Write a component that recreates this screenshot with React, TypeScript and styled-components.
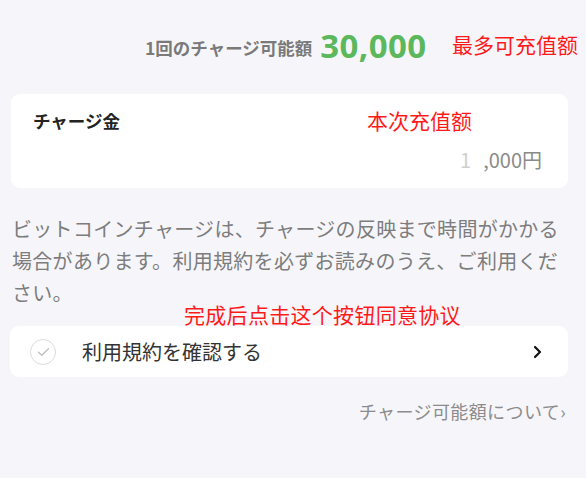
import React from "react";
import styled, { createGlobalStyle } from "styled-components";

const Global = createGlobalStyle`
  html, body { margin: 0; padding: 0; background: #f6f6fa; }
  body { font-family: "Noto Sans CJK JP", "Noto Sans", sans-serif; }
`;

const Page = styled.div`
  width: 586px;
  height: 478px;
  background: #f6f6fa;
  padding: 0 18px 0 11px;
  box-sizing: border-box;
  display: flex;
  flex-direction: column;
  position: relative;
`;

const Header = styled.div`
  height: 94px;
  display: flex;
  align-items: center;
  padding-left: 134px;
  padding-bottom: 4px;
  box-sizing: border-box;
  position: relative;
`;

const LimitLabel = styled.span`
  font-size: 17.5px;
  font-weight: 700;
  color: #7a7a7a;
  margin-top: 4px;
`;

const LimitValue = styled.span`
  font-family: "Open Sans", "Noto Sans", sans-serif;
  font-size: 33px;
  font-weight: 700;
  color: #5cb85c;
  margin-left: 8px;
  letter-spacing: 0.4px;
`;

const Note = styled.span<{ $x: number; $y: number }>`
  position: absolute;
  left: ${(p) => p.$x}px;
  top: ${(p) => p.$y}px;
  font-family: "Noto Sans CJK SC", sans-serif;
  font-size: 21px;
  line-height: 26px;
  color: #ff1a1a;
  white-space: nowrap;
`;

const Card = styled.div`
  background: #ffffff;
  border-radius: 9px;
  position: relative;
`;

const AmountCard = styled(Card)`
  height: 94px;
  padding: 14px 26px 0 22px;
  box-sizing: border-box;
  display: flex;
  flex-direction: column;
`;

const CardTitle = styled.div`
  font-size: 17.5px;
  font-weight: 700;
  color: #222;
  line-height: 26px;
`;

const AmountRow = styled.div`
  margin-top: 13px;
  display: flex;
  justify-content: flex-end;
  align-items: center;
  font-size: 20px;
  line-height: 26px;
  color: #8a8a8a;
`;

const Placeholder = styled.span`
  color: #cfcfcf;
  margin-right: 12px;
`;

const Paragraph = styled.p`
  margin: 25px 0 0 1px;
  font-size: 20px;
  line-height: 32px;
  letter-spacing: 0.3px;
  color: #7d7d7d;
  position: relative;
`;

const TermsRow = styled(Card)`
  margin: 17px 0 0 -1px;
  height: 51px;
  display: flex;
  align-items: center;
  padding: 0 26px 0 20px;
  box-sizing: border-box;
`;

const CheckCircle = styled.span`
  width: 26px;
  height: 26px;
  border-radius: 50%;
  border: 1px solid #dcdcdc;
  box-sizing: border-box;
  display: flex;
  align-items: center;
  justify-content: center;
  flex-shrink: 0;
`;

const TermsText = styled.span`
  margin-left: 26px;
  font-size: 20px;
  color: #333;
  flex: 1;
`;

const Chevron = styled.svg`
  width: 9px;
  height: 14px;
`;

const InfoLink = styled.div`
  margin: 21px 2px 0 0;
  align-self: flex-end;
  font-size: 18px;
  line-height: 26px;
  letter-spacing: 0.4px;
  color: #8c8c8c;
  display: flex;
  align-items: center;
`;

export default function App() {
  return (
    <>
      <Global />
      <Page>
        <Header>
          <LimitLabel>1回のチャージ可能額</LimitLabel>
          <LimitValue>30,000</LimitValue>
          <Note $x={441} $y={31}>最多可充值额</Note>
        </Header>
        <AmountCard>
          <CardTitle>チャージ金</CardTitle>
          <AmountRow>
            <Placeholder>1</Placeholder>
            <span>,000円</span>
          </AmountRow>
          <Note $x={356} $y={13}>本次充值额</Note>
        </AmountCard>
        <Paragraph>
          ビットコインチャージは、チャージの反映まで時間がかかる場合があります。利用規約を必ずお読みのうえ、ご利用ください。
          <Note $x={172} $y={88}>完成后点击这个按钮同意协议</Note>
        </Paragraph>
        <TermsRow>
          <CheckCircle>
            <svg width="13" height="10" viewBox="0 0 13 10">
              <path d="M1.5 5.2 L4.8 8.3 L11.5 1.8" fill="none" stroke="#bfbfbf" strokeWidth="1.4" strokeLinecap="round" strokeLinejoin="round" />
            </svg>
          </CheckCircle>
          <TermsText>利用規約を確認する</TermsText>
          <Chevron viewBox="0 0 9 14">
            <path d="M2 2 L7 7 L2 12" fill="none" stroke="#111" strokeWidth="2.2" strokeLinecap="round" strokeLinejoin="round" />
          </Chevron>
        </TermsRow>
        <InfoLink>チャージ可能額について›</InfoLink>
      </Page>
    </>
  );
}
